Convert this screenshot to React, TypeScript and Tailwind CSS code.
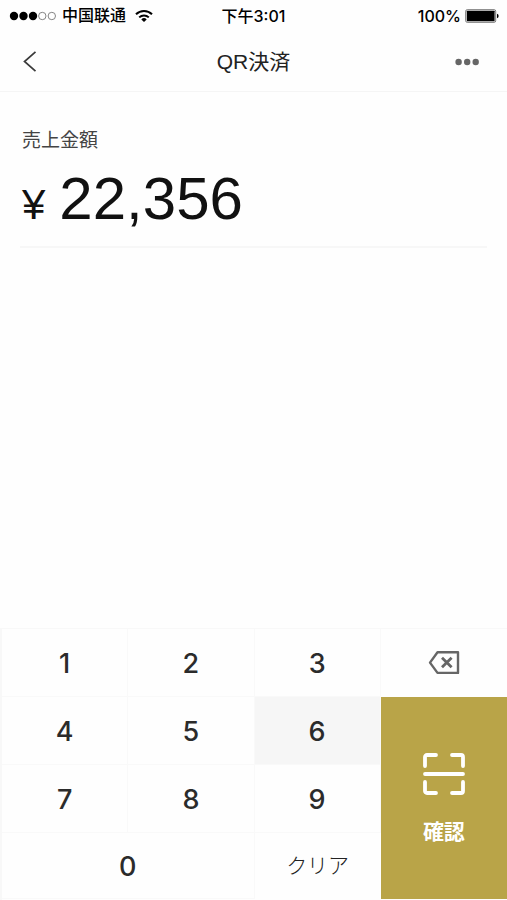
import { useState } from "react";
import clsx from "clsx";

const KEYS = ["1", "2", "3", "4", "5", "6", "7", "8", "9"];

// Explicit placement, so the tall confirm key can span the last column
const KEY_POSITION: Record<string, string> = {
  "1": "col-start-1 row-start-1",
  "2": "col-start-2 row-start-1",
  "3": "col-start-3 row-start-1",
  "4": "col-start-1 row-start-2",
  "5": "col-start-2 row-start-2",
  "6": "col-start-3 row-start-2",
  "7": "col-start-1 row-start-3",
  "8": "col-start-2 row-start-3",
  "9": "col-start-3 row-start-3",
  "0": "col-start-1 col-span-2 row-start-4",
};

function StatusBar() {
  return (
    <div className="grid h-8 grid-cols-3 items-center px-2 text-base text-black">
      <div className="flex items-center gap-1 whitespace-nowrap font-medium">
        <svg width="50" height="10" viewBox="0 0 50 10" aria-hidden="true">
          <circle cx="6" cy="5" r="4.2" />
          <circle cx="15.5" cy="5" r="4.2" />
          <circle cx="25" cy="5" r="4.2" />
          <circle cx="34.3" cy="5" r="3.7" fill="none" stroke="#777" strokeWidth="0.9" />
          <circle cx="43.8" cy="5" r="3.7" fill="none" stroke="#777" strokeWidth="0.9" />
        </svg>
        <span className="font-['Liberation_Sans','Noto_Sans_CJK_SC',sans-serif]">
          中国联通
        </span>
        <svg
          className="ml-1"
          width="20"
          height="14"
          viewBox="0 0 20 14"
          fill="none"
          stroke="currentColor"
          strokeWidth="2"
          aria-hidden="true"
        >
          <path d="M2 5.2a11.4 11.4 0 0 1 16 0" />
          <path d="M5.2 8.4a6.9 6.9 0 0 1 9.6 0" />
          <path d="M10 13 7.3 10.4a3.8 3.8 0 0 1 5.4 0Z" fill="currentColor" stroke="none" />
        </svg>
      </div>
      <div className="text-center font-['Inter','Noto_Sans_CJK_SC',sans-serif] font-medium">
        下午3:01
      </div>
      <div className="flex items-center justify-end gap-1 font-['Inter',sans-serif] font-medium">
        <span>100%</span>
        <svg width="34" height="14" viewBox="0 0 34 14" aria-hidden="true">
          <rect x="0.7" y="0.7" width="30" height="12.6" rx="1.5" fill="none" stroke="#777" />
          <rect x="1.8" y="1.8" width="27.8" height="10.4" rx="0.5" />
          <path d="M32 4.8a2.3 2.3 0 0 1 0 4.4Z" />
        </svg>
      </div>
    </div>
  );
}

function NumberKey({
  digit,
  active,
  onPress,
}: {
  digit: string;
  active: boolean;
  onPress: (digit: string) => void;
}) {
  return (
    <button
      type="button"
      onClick={() => onPress(digit)}
      className={clsx(
        "border-r border-b border-[#f9f9f9] pt-1 font-['Inter',sans-serif] text-[27px] font-medium text-[#2b2b2b]",
        KEY_POSITION[digit],
        active && "bg-[#f6f6f6]"
      )}
    >
      {digit}
    </button>
  );
}

export default function App() {
  const [amount, setAmount] = useState("22356");
  const [lastKey, setLastKey] = useState("6");

  function press(digit: string) {
    setLastKey(digit);
    setAmount((a) => (a.length < 8 ? String(Number(a + digit)) : a));
  }

  return (
    <div className="flex min-h-screen flex-col bg-[#fefefe] font-['Liberation_Sans','Noto_Sans_CJK_JP',sans-serif]">
      <StatusBar />
      <header className="grid h-[60px] grid-cols-3 items-center border-b border-[#f5f5f5] px-5">
        <button type="button" aria-label="戻る" className="justify-self-start">
          <svg
            width="18"
            height="24"
            viewBox="0 0 18 24"
            fill="none"
            stroke="#3a3a3a"
            strokeWidth="1.7"
          >
            <path d="M15.5 1.8 4.5 11.5l11 9.7" />
          </svg>
        </button>
        <h1 className="text-center text-[21px] text-[#222]">QR決済</h1>
        <button type="button" aria-label="メニュー" className="justify-self-end px-2">
          <svg width="24" height="8" viewBox="0 0 24 8" fill="#666">
            <circle cx="3.6" cy="4" r="3.2" />
            <circle cx="12.2" cy="4" r="3.2" />
            <circle cx="20.7" cy="4" r="3.2" />
          </svg>
        </button>
      </header>

      <main className="px-5 pt-8">
        <section className="border-b-2 border-[#f7f7f7] px-0.5 pb-2.5">
          <h2 className="text-[19px] leading-[34px] text-[#444]">売上金額</h2>
          <p className="mt-2.5 flex items-baseline gap-3.5 leading-[62px] text-[#111]">
            <span className="text-[42px]">¥</span>
            <span className="text-[60px]">{Number(amount).toLocaleString("en-US")}</span>
          </p>
        </section>
      </main>

      <div className="mt-auto grid grid-cols-4 grid-rows-[68px_68px_68px_66px] border-t border-l-2 border-[#f8f8f8] pb-px">
        {KEYS.map((k) => (
          <NumberKey key={k} digit={k} active={k === lastKey} onPress={press} />
        ))}
        <NumberKey digit="0" active={lastKey === "0"} onPress={press} />
        <button
          type="button"
          onClick={() => setAmount("0")}
          className="col-start-3 row-start-4 text-[21px] font-light text-[#222]"
        >
          クリア
        </button>
        <button
          type="button"
          aria-label="削除"
          onClick={() => setAmount((a) => a.slice(0, -1) || "0")}
          className="col-start-4 row-start-1 flex items-center justify-center"
        >
          <svg
            width="32"
            height="24"
            viewBox="0 0 32 24"
            fill="none"
            stroke="#666"
            strokeWidth="2.4"
            strokeLinejoin="round"
          >
            <path d="M9.5 1.3h20.5v20.6H9.5L2 11.6Z" />
            <path d="m14 6.8 9.6 9.4m0-9.4L14 16.2" strokeWidth="2.8" />
          </svg>
        </button>
        <button
          type="button"
          className="col-start-4 row-span-3 row-start-2 flex flex-col items-center justify-center gap-5 bg-[#b9a448] pt-1 text-[21px] font-bold text-white"
        >
          <svg
            width="44"
            height="44"
            viewBox="0 0 44 44"
            fill="none"
            stroke="currentColor"
            strokeWidth="3.8"
            strokeLinecap="round"
            aria-hidden="true"
          >
            <path d="M3 14V5a2 2 0 0 1 2-2h9M30 3h9a2 2 0 0 1 2 2v9M41 30v9a2 2 0 0 1-2 2h-9M14 41H5a2 2 0 0 1-2-2v-9M3 22h38" />
          </svg>
          確認
        </button>
      </div>
    </div>
  );
}
